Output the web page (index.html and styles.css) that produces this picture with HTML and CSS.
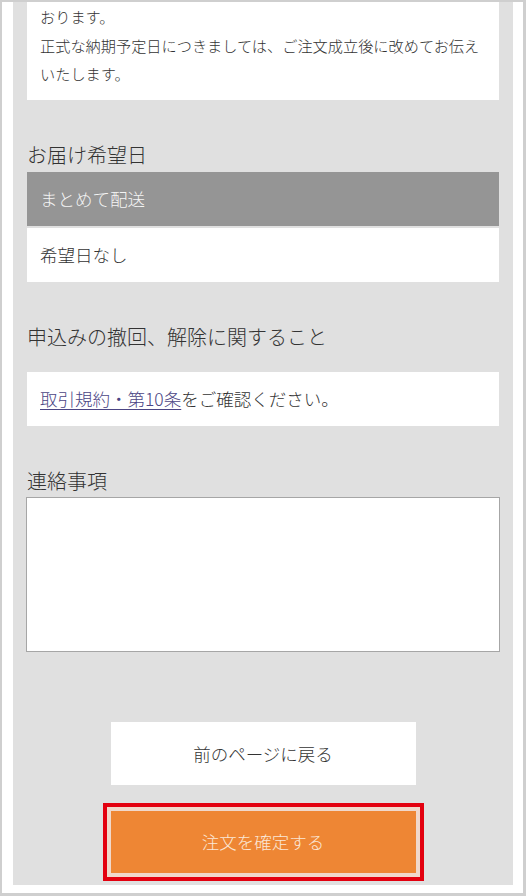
FILE: index.html
```html
<!DOCTYPE html>
<html lang="ja">
<head>
<meta charset="utf-8">
<title>ご注文内容の確認</title>
<link rel="stylesheet" href="styles.css">
</head>
<body>
<div class="frame">
  <main class="panel">
    <div class="card notice">
      <p>おります。</p>
      <p>正式な納期予定日につきましては、ご注文成立後に改めてお伝えいたします。</p>
    </div>

    <section class="section">
      <h2 class="heading heading-tight">お届け希望日</h2>
      <div class="options">
        <div class="option option-selected">まとめて配送</div>
        <div class="option">希望日なし</div>
      </div>
    </section>

    <section class="section">
      <h2 class="heading heading-loose">申込みの撤回、解除に関すること</h2>
      <div class="card terms"><a href="#" class="link">取引規約・第10条</a>をご確認ください。</div>
    </section>

    <section class="section">
      <h2 class="heading heading-note">連絡事項</h2>
      <textarea class="note" aria-label="連絡事項"></textarea>
    </section>

    <div class="actions">
      <button type="button" class="btn btn-back">前のページに戻る</button>
      <button type="button" class="btn btn-confirm">注文を確定する</button>
    </div>
  </main>
</div>
</body>
</html>
```

FILE: styles.css
```css
* {
  box-sizing: border-box;
}

html, body {
  margin: 0;
  padding: 0;
  background: #ffffff;
}

body {
  font-family: "Noto Sans CJK JP", "Noto Sans", sans-serif;
  font-weight: 300;
  color: #333333;
}

.frame {
  width: 526px;
  height: 896px;
  border-style: solid;
  border-color: #cfcfcf;
  border-width: 2px 3px 3px 2px;
  padding: 0 10px 8px 11px;
  overflow: hidden;
}

.panel {
  background: #e0e0e0;
  height: 100%;
  padding: 0 14px;
  display: flex;
  flex-direction: column;
}

.card {
  background: #ffffff;
}

.notice {
  padding: 0 12px 12px 13px;
  font-size: 15.2px;
  line-height: 28.5px;
}

.notice p {
  margin: 0;
}

.section {
  margin-top: 41px;
  display: flex;
  flex-direction: column;
}

.heading {
  margin: 0;
  font-size: 20px;
  font-weight: 300;
  line-height: 28px;
  color: #333333;
}

.heading-tight {
  margin-bottom: 3px;
}

.heading-loose {
  margin-bottom: 21px;
}

.heading-note {
  margin-bottom: 2px;
}

.options {
  display: flex;
  flex-direction: column;
  gap: 2px;
}

.option {
  height: 54px;
  display: flex;
  align-items: center;
  padding-left: 13px;
  font-size: 17.5px;
  background: #ffffff;
  color: #333333;
}

.option-selected {
  background: #959595;
  color: #f4f4f4;
}

.terms {
  height: 54px;
  display: flex;
  align-items: center;
  padding-left: 13px;
  font-size: 17.5px;
}

.link {
  color: #4b4584;
  text-decoration: underline;
  text-underline-offset: 3px;
}

.note {
  display: block;
  width: calc(100% + 2px);
  margin-left: -1px;
  height: 155px;
  border: 1.5px solid #a6a6a6;
  background: #ffffff;
  resize: none;
  font-family: inherit;
  font-size: 16px;
}

.actions {
  margin-top: 70px;
  display: flex;
  flex-direction: column;
  align-items: center;
  gap: 26px;
}

.btn {
  width: 305px;
  border: none;
  font-family: inherit;
  font-weight: 300;
  font-size: 17.5px;
  cursor: pointer;
}

.btn-back {
  height: 63px;
  background: #ffffff;
  color: #333333;
}

.btn-confirm {
  height: 62px;
  background: #ee8634;
  color: #fbe6d6;
  box-shadow: 0 0 0 4px #f0d8cb, 0 0 0 8px #e3000f;
}
```
